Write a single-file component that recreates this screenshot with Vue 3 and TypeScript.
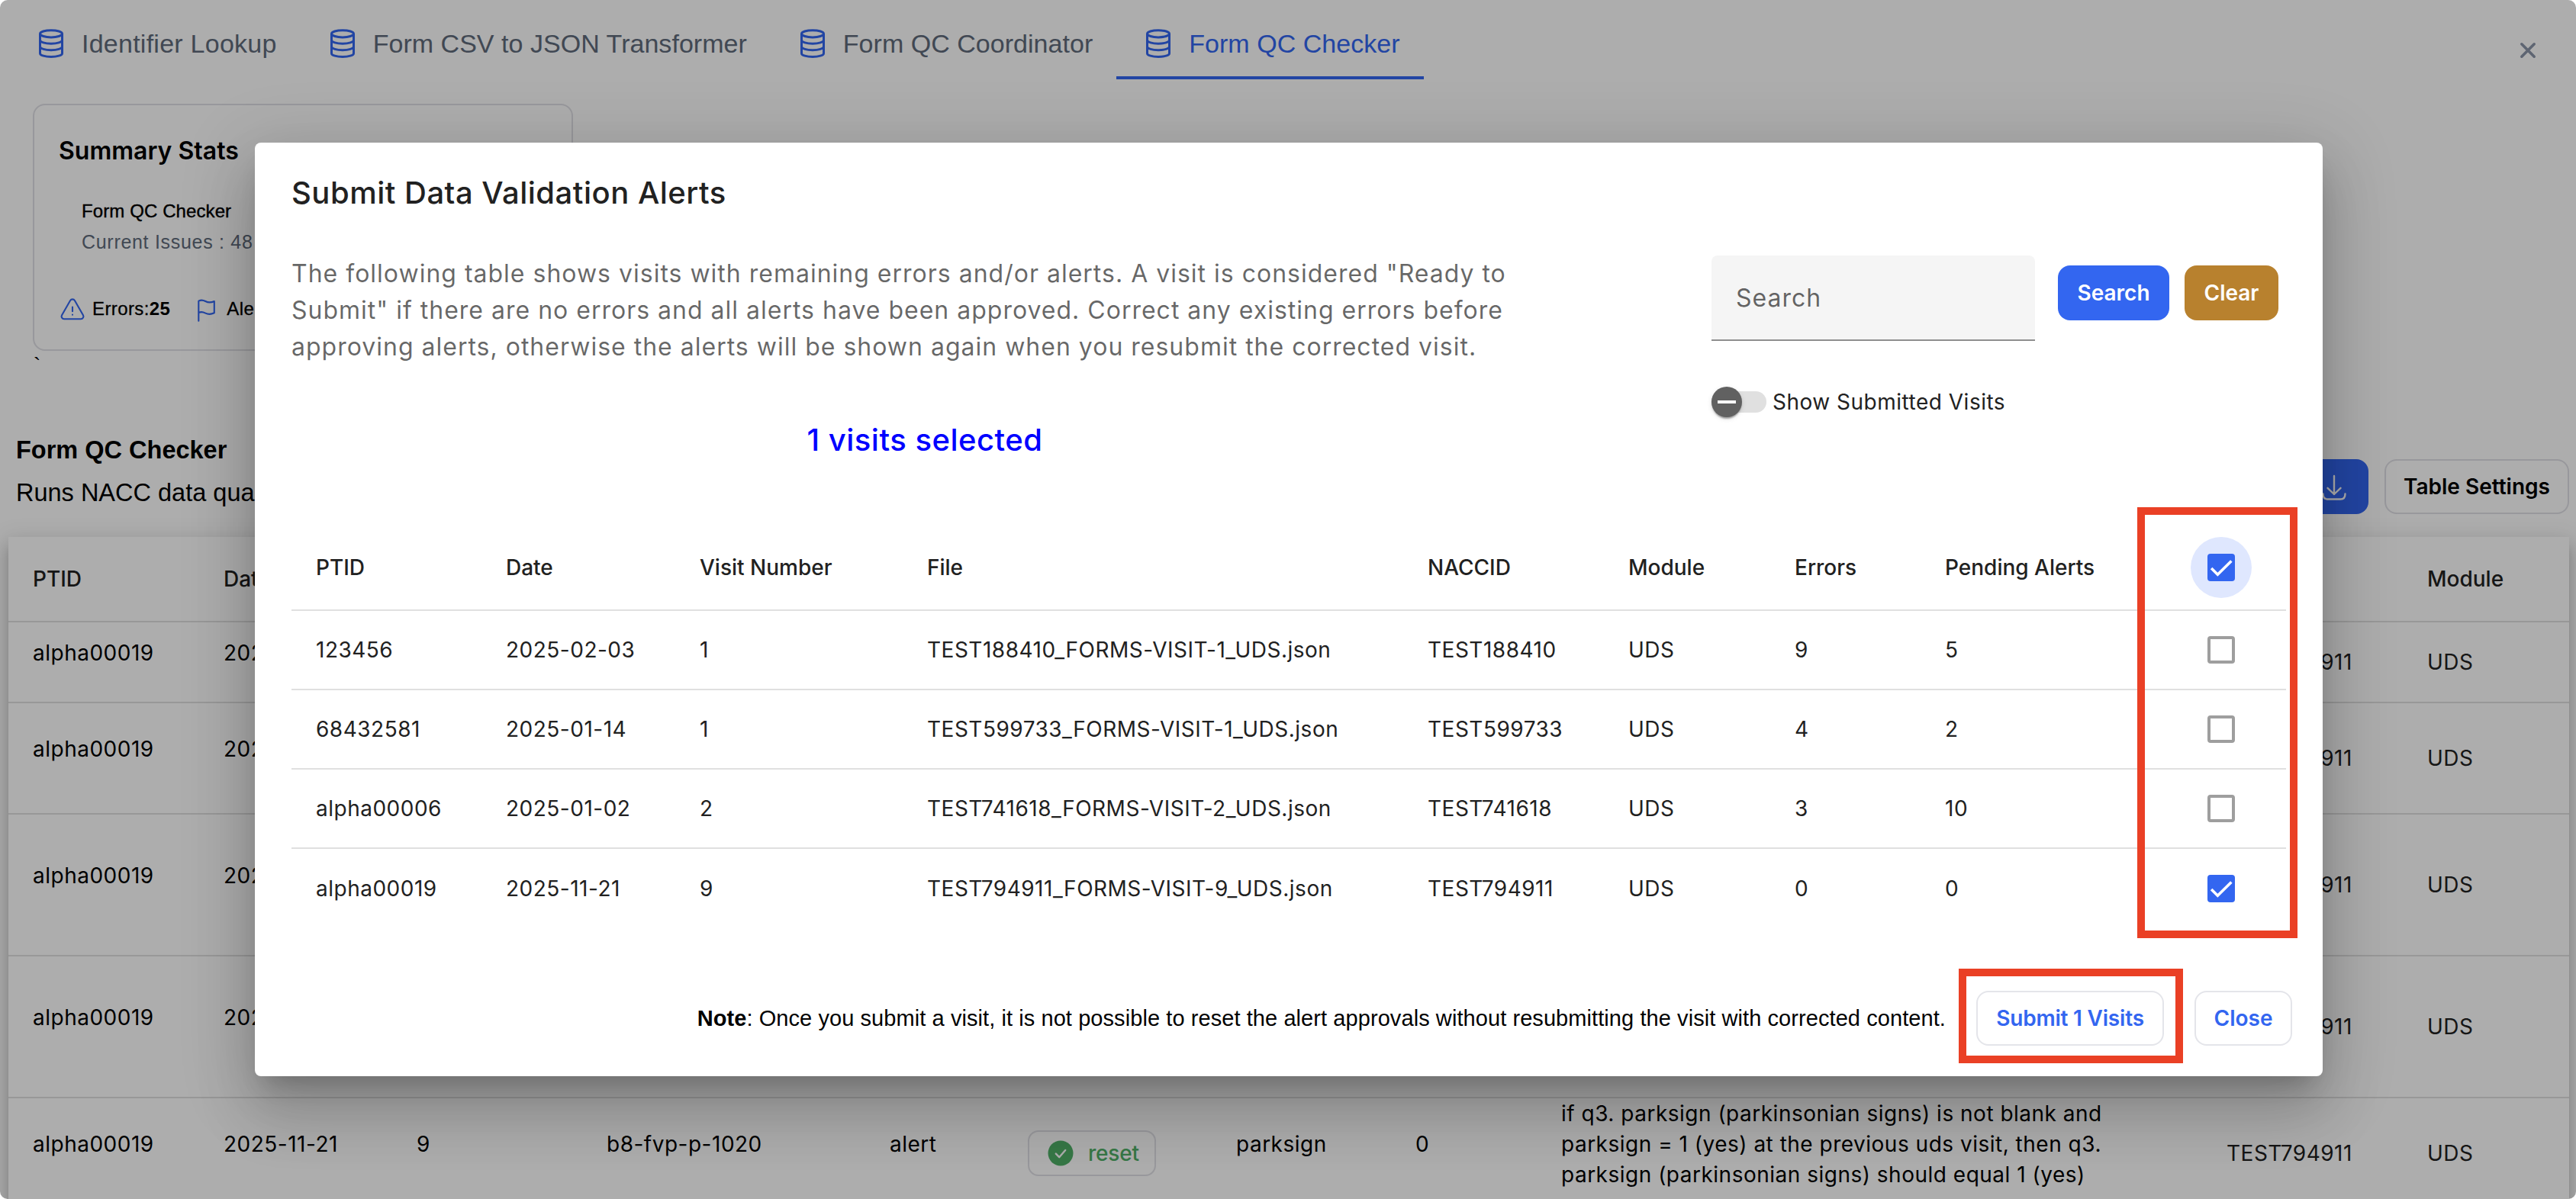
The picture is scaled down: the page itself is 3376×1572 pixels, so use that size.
<script setup lang="ts">
import { computed, ref } from 'vue'

interface Tab {
  label: string
  active: boolean
}

interface Visit {
  ptid: string
  date: string
  visit: string
  file: string
  naccid: string
  module: string
  errors: number
  pending: number
  selected: boolean
}

interface Issue {
  size: string
  cells: string[]
  message: string[]
}

const tabs: Tab[] = [
  { label: 'Identifier Lookup', active: false },
  { label: 'Form CSV to JSON Transformer', active: false },
  { label: 'Form QC Coordinator', active: false },
  { label: 'Form QC Checker', active: true },
]

const columns = ['PTID', 'Date', 'Visit Number', 'File', 'NACCID', 'Module', 'Errors', 'Pending Alerts']

const visits = ref<Visit[]>([
  { ptid: '123456', date: '2025-02-03', visit: '1', file: 'TEST188410_FORMS-VISIT-1_UDS.json', naccid: 'TEST188410', module: 'UDS', errors: 9, pending: 5, selected: false },
  { ptid: '68432581', date: '2025-01-14', visit: '1', file: 'TEST599733_FORMS-VISIT-1_UDS.json', naccid: 'TEST599733', module: 'UDS', errors: 4, pending: 2, selected: false },
  { ptid: 'alpha00006', date: '2025-01-02', visit: '2', file: 'TEST741618_FORMS-VISIT-2_UDS.json', naccid: 'TEST741618', module: 'UDS', errors: 3, pending: 10, selected: false },
  { ptid: 'alpha00019', date: '2025-11-21', visit: '9', file: 'TEST794911_FORMS-VISIT-9_UDS.json', naccid: 'TEST794911', module: 'UDS', errors: 0, pending: 0, selected: true },
])

const selectedCount = computed(() => visits.value.filter((v) => v.selected).length)

const issues: Issue[] = [
  { size: 'short', cells: ['alpha00019', '2025-11-21'], message: [] },
  { size: 'medium', cells: ['alpha00019', '2025-11-21'], message: [] },
  { size: 'tall', cells: ['alpha00019', '2025-11-21'], message: [] },
  { size: 'tall', cells: ['alpha00019', '2025-11-21'], message: [] },
  {
    size: 'medium',
    cells: ['alpha00019', '2025-11-21', '9', 'b8-fvp-p-1020', 'alert', '', 'parksign', '0'],
    message: [
      'if q3. parksign (parkinsonian signs) is not blank and',
      'parksign = 1 (yes) at the previous uds visit, then q3.',
      'parksign (parkinsonian signs) should equal 1 (yes)',
    ],
  },
]
</script>

<template>
  <div class="app">
    <header class="topbar">
      <nav class="tabs">
        <div v-for="t in tabs" :key="t.label" class="tab" :class="{ active: t.active }">
          <svg class="stack" viewBox="0 0 36 40" fill="none" stroke="currentColor" stroke-width="3">
            <ellipse cx="18" cy="7.3" rx="14.5" ry="4.6" />
            <path d="M3.5 7.3v25.6c0 2.6 6.5 4.6 14.5 4.6s14.5-2 14.5-4.6V7.3M3.5 15.6c0 2.6 6.5 4.6 14.5 4.6s14.5-2 14.5-4.6M3.5 24.1c0 2.6 6.5 4.6 14.5 4.6s14.5-2 14.5-4.6" />
          </svg>
          <span>{{ t.label }}</span>
        </div>
      </nav>
      <svg class="close-x" viewBox="0 0 24 24" fill="none" stroke="currentColor" stroke-width="3.6" stroke-linecap="round">
        <path d="M3.8 3.8l16.4 16.4M20.2 3.8L3.8 20.2" />
      </svg>
    </header>

    <section class="stats">
      <h2>Summary Stats</h2>
      <div class="stats-body">
        <div class="stats-name">Form QC Checker</div>
        <div class="stats-issues">Current Issues : 48</div>
      </div>
      <div class="stats-row">
        <svg class="warn" viewBox="0 0 24 24" fill="none" stroke="currentColor" stroke-width="1.4" stroke-linecap="round" stroke-linejoin="round">
          <path d="M12 9v3.75m-9.303 3.376c-.866 1.5.217 3.374 1.948 3.374h14.71c1.73 0 2.813-1.874 1.948-3.374L13.949 3.378c-.866-1.5-3.032-1.5-3.898 0L2.697 16.126ZM12 15.75h.007v.008H12v-.008Z" />
        </svg>
        <span>Errors:<b>25</b></span>
        <svg class="flag" viewBox="0 0 24 30" fill="none" stroke="currentColor" stroke-width="2.1" stroke-linecap="round" stroke-linejoin="round">
          <path d="M1.3 28.7V2.6c2.5-1.3 5.5-1.5 9 .4s7.5 1.8 11.5 0v15.3c-4 1.9-8 2.1-11.5.3s-6.5-1.8-9-.5" />
        </svg>
        <span>Ale</span>
      </div>
    </section>
    <div class="tick">`</div>

    <section class="heading">
      <div>
        <h1>Form QC Checker</h1>
        <p>Runs NACC data qua</p>
      </div>
      <div class="heading-actions">
        <button class="download">
          <svg viewBox="0 0 36 36" fill="none" stroke="currentColor" stroke-width="2.4" stroke-linecap="round" stroke-linejoin="round">
            <path d="M18 4v24M9.5 19.8L18 28l8.5-8.2M3.5 27.5c0 5 2.5 7 6 7h17c3.5 0 6-2 6-7" />
          </svg>
        </button>
        <button class="settings">Table Settings</button>
      </div>
    </section>

    <section class="issues">
      <div class="issue head">
        <span>PTID</span><span>Date</span><span class="module">Module</span>
      </div>
      <div v-for="(row, r) in issues" :key="r" class="issue" :class="row.size">
        <template v-for="(cell, c) in row.cells" :key="c">
          <span v-if="c !== 5" class="raised">{{ cell }}</span>
          <span v-else>
            <span class="reset">
              <svg viewBox="0 0 34 34">
                <circle cx="17" cy="17" r="16.5" fill="currentColor" />
                <path d="M10.8 17.6l4.4 4.6 8-9.2" fill="none" stroke="#fff" stroke-width="2.4" stroke-linecap="round" stroke-linejoin="round" />
              </svg>
              reset
            </span>
          </span>
        </template>
        <span v-if="row.message.length" class="raised message">
          <span v-for="line in row.message" :key="line">{{ line }}</span>
        </span>
        <span class="naccid">TEST794911</span>
        <span class="module">UDS</span>
      </div>
    </section>

    <div class="overlay">
      <div class="dialog">
        <h3>Submit Data Validation Alerts</h3>
        <div class="dialog-top">
          <div class="intro">
            <p>
              The following table shows visits with remaining errors and/or alerts. A visit is considered "Ready to<br />
              Submit" if there are no errors and all alerts have been approved. Correct any existing errors before<br />
              approving alerts, otherwise the alerts will be shown again when you resubmit the corrected visit.
            </p>
            <div class="count">{{ selectedCount }} visits selected</div>
          </div>
          <div class="filters">
            <div class="search-row">
              <div class="field">Search</div>
              <button class="btn search">Search</button>
              <button class="btn clear">Clear</button>
            </div>
            <div class="toggle-row">
              <div class="toggle"><i></i></div>
              <span>Show Submitted Visits</span>
            </div>
          </div>
        </div>

        <div class="visits">
          <div class="visit head">
            <span v-for="c in columns" :key="c">{{ c }}</span>
            <span class="pick">
              <span class="halo">
                <span class="check on">
                  <svg viewBox="0 0 24 24" fill="none" stroke="#fff" stroke-width="2.4"><path d="M3.4 12.7l5.5 5.5L20.9 6.3" /></svg>
                </span>
              </span>
            </span>
          </div>
          <div v-for="v in visits" :key="v.ptid" class="visit">
            <span>{{ v.ptid }}</span>
            <span>{{ v.date }}</span>
            <span>{{ v.visit }}</span>
            <span>{{ v.file }}</span>
            <span>{{ v.naccid }}</span>
            <span>{{ v.module }}</span>
            <span>{{ v.errors }}</span>
            <span>{{ v.pending }}</span>
            <span class="pick">
              <span class="check" :class="{ on: v.selected }">
                <svg v-if="v.selected" viewBox="0 0 24 24" fill="none" stroke="#fff" stroke-width="2.4"><path d="M3.4 12.7l5.5 5.5L20.9 6.3" /></svg>
              </span>
            </span>
          </div>
        </div>

        <footer>
          <p class="note">
            <b>Note</b>: Once you submit a visit, it is not possible to reset the alert approvals without resubmitting the visit with corrected content.
          </p>
          <button class="btn outline submit">Submit {{ selectedCount }} Visits</button>
          <button class="btn outline">Close</button>
        </footer>

        <div class="marker marker-checks"></div>
        <div class="marker marker-submit"></div>
      </div>
    </div>
  </div>
</template>

<style>
html,
body {
  margin: 0;
  background: #fff;
}
</style>

<style scoped>
.app {
  position: relative;
  width: 3376px;
  height: 1572px;
  overflow: hidden;
  border-radius: 10px;
  background: #fff;
  color: #000;
  font-family: Inter, 'Liberation Sans', sans-serif;
  font-size: 28px;
  box-sizing: border-box;
}
.app * {
  box-sizing: border-box;
}
h1,
h2,
h3,
p {
  margin: 0;
}
button {
  font-family: inherit;
  border: 0;
  padding: 0;
}

/* top navigation */
.topbar {
  display: flex;
  justify-content: space-between;
  height: 104px;
  padding: 0 51px 0 12px;
}
.tabs {
  display: flex;
}
.tab {
  display: flex;
  align-items: center;
  height: 104px;
  padding: 13px 31px 0 37px;
  border-bottom: 4px solid transparent;
  color: #606b7b;
  font-family: 'Liberation Sans', Arial, sans-serif;
  font-size: 34px;
  line-height: 40px;
  letter-spacing: 0.03px;
  white-space: nowrap;
}
.tab:first-child {
  letter-spacing: 0.25px;
}
.tab.active {
  color: #3366f0;
  border-bottom-color: #3366f0;
}
.stack {
  width: 36px;
  height: 40px;
  margin-right: 22px;
  color: #3366f0;
}
.close-x {
  width: 24px;
  height: 24px;
  margin-top: 54px;
  color: #8b95a9;
}

/* summary card */
.stats {
  width: 708px;
  height: 324px;
  margin: 32px 0 0 43px;
  padding: 40px 32px 0;
  border: 2px solid #e0e0e6;
  border-radius: 16px;
}
.stats h2 {
  font-size: 32px;
  line-height: 40px;
  font-weight: 600;
}
.stats-body {
  padding: 39px 30px 0;
  font-family: 'Liberation Sans', Arial, sans-serif;
  font-size: 24px;
  line-height: 40px;
}
.stats-name {
  letter-spacing: 0.1px;
  -webkit-text-stroke: 0.4px #000;
}
.stats-issues {
  color: #606b7b;
  font-size: 25px;
  letter-spacing: 0.7px;
}
.stats-row {
  display: flex;
  align-items: flex-start;
  margin-top: 52px;
  font-family: 'Liberation Sans', Arial, sans-serif;
  font-size: 24px;
  line-height: 32px;
  letter-spacing: 0.4px;
  -webkit-text-stroke: 0.3px #000;
}
.warn {
  width: 36px;
  height: 36px;
  margin-right: 8px;
  color: #3366f0;
}
.flag {
  width: 24px;
  height: 30px;
  margin: 3px 14px 0 36px;
  color: #3366f0;
}
.stats-row b {
  -webkit-text-stroke: 0;
}
.tick {
  height: 102px;
  padding: 4px 0 0 44px;
  font-family: 'Liberation Sans', Arial, sans-serif;
  font-size: 28px;
  line-height: 30px;
}

/* page heading */
.heading {
  display: flex;
  justify-content: space-between;
  align-items: flex-end;
  height: 112px;
  padding: 0 9px 0 21px;
}
.heading h1,
.heading p {
  font-family: 'Liberation Sans', Arial, sans-serif;
  font-size: 32.5px;
  line-height: 56px;
}
.heading h1 {
  font-weight: 700;
}
.heading-actions {
  display: flex;
  gap: 21px;
}
.download {
  width: 90px;
  height: 72px;
  border-radius: 16px;
  background: #3366f0;
  color: #fff;
}
.download svg {
  display: block;
  width: 36px;
  height: 36px;
  margin: 0 auto;
}
.settings {
  width: 242px;
  height: 72px;
  border: 2px solid #e0e0e6;
  border-radius: 16px;
  background: #fff;
  color: #000;
  font-size: 28px;
  font-weight: 600;
  white-space: nowrap;
}

/* issue table behind the dialog */
.issues {
  width: 3356px;
  margin: 30px 0 0 11px;
  background: #fff;
  box-shadow:
    0 10px 10px -6px rgba(0, 0, 0, 0.2),
    0 16px 20px 2px rgba(0, 0, 0, 0.14),
    0 6px 28px 4px rgba(0, 0, 0, 0.12);
}
.issue {
  display: grid;
  grid-template-columns: 250px 253px 249px 371px 181px 273px 235px 191px 872px 263px 218px;
  align-items: center;
  border-bottom: 2px solid #e0e0e0;
  letter-spacing: 0.5px;
  line-height: 40px;
  white-space: nowrap;
}
.issue > span {
  padding-left: 32px;
}
.issue.head {
  height: 112px;
  font-weight: 500;
  letter-spacing: 0;
  color: #212121;
}
.issue.short {
  height: 106px;
}
.issue.medium {
  height: 146px;
}
.issue.tall {
  height: 186px;
}
.raised {
  padding-bottom: 24px;
}
.message {
  display: flex;
  flex-direction: column;
}
.naccid {
  grid-column: 10;
  color: #212121;
}
.module {
  grid-column: 11;
  color: #212121;
}
.reset {
  display: flex;
  align-items: center;
  width: 168px;
  height: 60px;
  padding-left: 24px;
  gap: 19px;
  border: 2px solid #e0e0e6;
  border-radius: 14px;
  color: #50b068;
  font-weight: 500;
  letter-spacing: -0.2px;
}
.reset svg {
  width: 34px;
  height: 34px;
}

/* dialog */
.overlay {
  position: absolute;
  inset: 0;
  padding: 187px 332px 161px 334px;
  background: rgba(0, 0, 0, 0.32);
}
.dialog {
  position: relative;
  height: 1224px;
  padding: 0 48px;
  border-radius: 8px;
  background: #fff;
  color: #212121;
  box-shadow:
    0 22px 30px -14px rgba(0, 0, 0, 0.2),
    0 48px 76px 6px rgba(0, 0, 0, 0.14),
    0 18px 92px 16px rgba(0, 0, 0, 0.12);
}
.dialog h3 {
  padding-top: 34px;
  font-size: 40px;
  line-height: 64px;
  font-weight: 500;
  letter-spacing: 0.5px;
}
.dialog-top {
  display: flex;
  justify-content: space-between;
  height: 403px;
  padding-top: 50px;
}
.intro {
  width: 1660px;
}
.intro p {
  color: rgba(0, 0, 0, 0.6);
  font-size: 32px;
  line-height: 48px;
  letter-spacing: 1px;
  white-space: nowrap;
}
.count {
  margin-top: 66px;
  color: #0000ff;
  font-size: 40px;
  line-height: 64px;
  font-weight: 500;
  letter-spacing: 0.5px;
  text-align: center;
}
.filters {
  width: 753px;
}
.search-row {
  display: flex;
  align-items: flex-start;
}
.field {
  width: 424px;
  height: 112px;
  margin-right: 30px;
  padding-left: 32px;
  border-bottom: 2px solid #8f8f8f;
  border-radius: 8px 8px 0 0;
  background: #f5f5f5;
  color: rgba(0, 0, 0, 0.6);
  font-size: 32px;
  line-height: 111px;
  letter-spacing: 1px;
}
.btn {
  height: 72px;
  border-radius: 16px;
  font-size: 28px;
  font-weight: 600;
  white-space: nowrap;
}
.search {
  width: 146px;
  margin: 13px 20px 0 0;
  background: #3366f0;
  color: #fff;
}
.clear {
  width: 123px;
  margin-top: 13px;
  background: #b8812e;
  color: #fff;
}
.toggle-row {
  display: flex;
  align-items: center;
  height: 40px;
  margin-top: 60px;
  gap: 8px;
  letter-spacing: 0.5px;
}
.toggle {
  display: flex;
  align-items: center;
  width: 72px;
  height: 28px;
  border-radius: 14px;
  background: #e0e0e0;
}
.toggle i {
  display: flex;
  align-items: center;
  justify-content: center;
  flex: none;
  width: 40px;
  height: 40px;
  border-radius: 50%;
  background: #616161;
  box-shadow:
    0 4px 2px -2px rgba(0, 0, 0, 0.2),
    0 2px 2px rgba(0, 0, 0, 0.14),
    0 2px 6px rgba(0, 0, 0, 0.12);
}
.toggle i::before {
  content: '';
  width: 24px;
  height: 4px;
  background: #fff;
}

/* visit table */
.visit {
  display: grid;
  grid-template-columns: 249px 254px 298px 656px 263px 218px 197px 307px 172px;
  align-items: center;
  height: 104px;
  border-bottom: 2px solid #e0e0e0;
  letter-spacing: 0.5px;
  line-height: 40px;
  white-space: nowrap;
}
.visit > span {
  padding-left: 32px;
}
.visit:last-child {
  border-bottom: 0;
}
.visit.head {
  height: 113px;
  font-weight: 500;
  letter-spacing: 0;
}
.visit > .pick {
  display: flex;
  justify-content: center;
  padding: 0 0 0 1px;
}
.halo {
  display: flex;
  align-items: center;
  justify-content: center;
  width: 80px;
  height: 80px;
  border-radius: 50%;
  background: #dfe7fe;
}
.check {
  display: block;
  width: 36px;
  height: 36px;
  border: 4px solid #9e9e9e;
  border-radius: 4px;
}
.check.on {
  border: 0;
  background: #3366f0;
}
.check svg {
  display: block;
  width: 36px;
  height: 36px;
}

footer {
  display: flex;
  justify-content: flex-end;
  align-items: center;
  height: 72px;
  margin: 82px -8px 0 0;
}
.note {
  margin-right: 40px;
  color: #000;
  font-family: 'Liberation Sans', Arial, sans-serif;
  font-size: 29px;
  letter-spacing: 0.075px;
  white-space: nowrap;
}
.outline {
  width: 128px;
  border: 2px solid #e4e5ea;
  background: #fff;
  color: #3366f0;
}
.submit {
  width: 246px;
  margin-right: 40px;
  letter-spacing: -0.2px;
}

/* highlight frames */
.marker {
  position: absolute;
  border: 10px solid #ea4025;
}
.marker-checks {
  left: 2467px;
  top: 478px;
  width: 210px;
  height: 565px;
}
.marker-submit {
  left: 2233px;
  top: 1083px;
  width: 294px;
  height: 124px;
}
</style>
